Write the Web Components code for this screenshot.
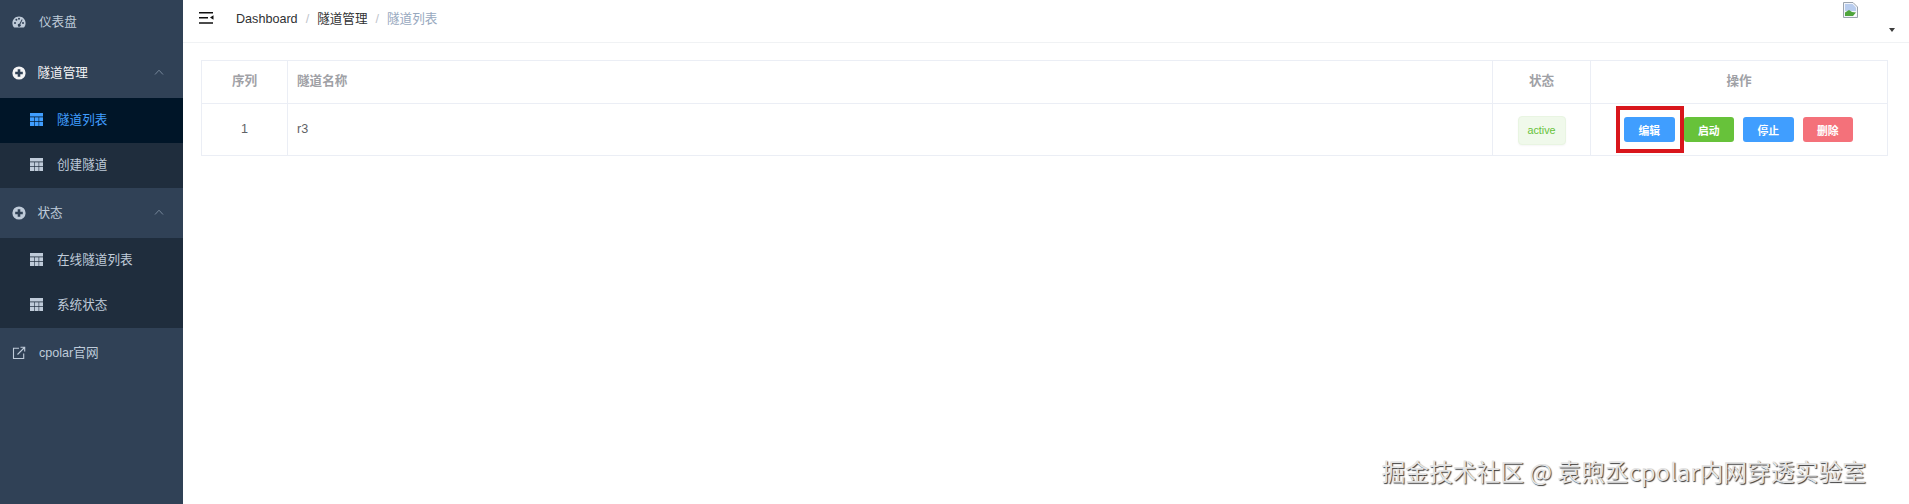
<!DOCTYPE html>
<html lang="zh">
<head>
<meta charset="utf-8">
<title>隧道列表</title>
<style>
  html, body { margin: 0; height: 100%; overflow: hidden; background: #fff; }
  body { font-family: "Liberation Sans", "Noto Sans CJK SC", sans-serif; font-size: 12.6px; }
</style>
</head>
<body>
<app-shell>
  <side-nav slot="side">
    <nav-item icon="gauge" style="margin:-1px 0 1px">仪表盘</nav-item>
    <nav-item icon="plus" arrow style="--item-color:#f4f4f5">隧道管理</nav-item>
    <nav-sub active>隧道列表</nav-sub>
    <nav-sub>创建隧道</nav-sub>
    <nav-item icon="plus" arrow>状态</nav-item>
    <nav-sub>在线隧道列表</nav-sub>
    <nav-sub>系统状态</nav-sub>
    <nav-item icon="link">cpolar官网</nav-item>
  </side-nav>
  <top-bar slot="top"></top-bar>
  <tunnel-table>
    <tag-active slot="status">active</tag-active>
    <el-btn slot="actions" color="#409eff" highlight>编辑</el-btn>
    <el-btn slot="actions" color="#67c23a">启动</el-btn>
    <el-btn slot="actions" color="#409eff">停止</el-btn>
    <el-btn slot="actions" color="#f4717a">删除</el-btn>
  </tunnel-table>
  <water-mark slot="over">掘金技术社区 @ 袁煦丞cpolar内网穿透实验室</water-mark>
</app-shell>

<script>
const FONT = '"Liberation Sans", "Noto Sans CJK SC", sans-serif';

class AppShell extends HTMLElement {
  connectedCallback() {
    this.attachShadow({ mode: 'open' }).innerHTML = `
      <style>
        :host { display: flex; height: 504px; position: relative; overflow: hidden; font-family: ${FONT}; }
        .side { flex: 0 0 183px; background: #304156; overflow: hidden; }
        .main { flex: 1; min-width: 0; display: flex; flex-direction: column; }
        .content { padding: 17px 21px 0 18px; }
      </style>
      <div class="side"><slot name="side"></slot></div>
      <div class="main">
        <slot name="top"></slot>
        <div class="content"><slot></slot></div>
      </div>
      <slot name="over"></slot>
    `;
  }
}
customElements.define('app-shell', AppShell);

class SideNav extends HTMLElement {
  connectedCallback() {
    this.attachShadow({ mode: 'open' }).innerHTML = `
      <style>
        :host { display: flex; flex-direction: column; margin-top: -2px; }
      </style>
      <slot></slot>
    `;
  }
}
customElements.define('side-nav', SideNav);

const NAV_ICONS = {
  gauge: `<svg width="14" height="12" viewBox="0 0 14 12"><path fill="#bfcbd9" d="M7 0.6C3.2 0.6 0.4 3.5 0.4 7.2c0 1.5.4 2.8 1.2 3.9.2.2.4.3.7.3h9.4c.3 0 .5-.1.7-.3.8-1.1 1.2-2.4 1.2-3.9C13.600 3.500 10.800.600 7 .600z"/><g fill="#304156"><circle cx="3" cy="7" r="1"/><circle cx="4.400" cy="3.800" r="1"/><circle cx="7" cy="2.700" r="1"/><circle cx="11" cy="7" r="1"/><path d="M9.800 3.300l.8.4L8.300 8.200a1.500 1.500 0 1 1-.9-.4z"/></g></svg>`,
  plus: `<svg width="14" height="14" viewBox="0 0 14 14"><circle cx="7" cy="7" r="6.600" fill="currentColor"/><path fill="#304156" d="M5.700 3.200h2.600v2.500h2.500v2.600H8.300v2.500H5.700V8.300H3.200V5.700h2.500z"/></svg>`,
  link: `<svg width="14" height="14" viewBox="0 0 14 14" fill="none" stroke="#bfcbd9" stroke-width="1.100"><path d="M7 2.300H1.500v10.200h10.200V7.500"/><path d="M5.500 8.500L12.500 1.500M8.500 1.300h4.200v4.200"/></svg>`
};

class NavItem extends HTMLElement {
  connectedCallback() {
    const hasArrow = this.hasAttribute('arrow');
    const icon = NAV_ICONS[this.getAttribute('icon')] || '';
    const arrow = hasArrow
      ? `<svg class="arrow" width="10" height="6" viewBox="0 0 10 6" fill="none" stroke="#75869a" stroke-width="1"><path d="M1 5.500L5 1.200l4 4.300"/></svg>`
      : '';
    this.attachShadow({ mode: 'open' }).innerHTML = `
      <style>
        :host { display: flex; flex: 0 0 50px; height: 50px; align-items: center; padding-left: 12px; font-size: 12.6px;
                color: var(--item-color, #bfcbd9); box-sizing: border-box; position: relative; }
        .ic { width: 14px; display: flex; justify-content: center; margin-right: ${hasArrow ? 11.500 : 13}px; }
        .tx { padding-bottom: 3px; }
        .arrow { position: absolute; right: 19px; top: 21px; }
      </style>
      <span class="ic">${icon}</span><span class="tx"><slot></slot></span>${arrow}
    `;
  }
}
customElements.define('nav-item', NavItem);

class NavSub extends HTMLElement {
  connectedCallback() {
    const on = this.hasAttribute('active');
    const c = on ? '#409eff' : '#bfcbd9';
    this.attachShadow({ mode: 'open' }).innerHTML = `
      <style>
        :host { display: flex; flex: 0 0 45px; height: 45px; align-items: center; padding-left: 30px; font-size: 12.6px;
                background: ${on ? '#001528' : '#1f2d3d'}; color: ${c}; box-sizing: border-box; }
        svg { margin-right: 14px; fill: ${c}; margin-top: -2px; }
        .tx { padding-bottom: 4px; }
      </style>
      <svg width="13" height="13" viewBox="0 0 13 13">
        <rect width="13" height="3.500"/>
        <rect y="4.300" width="4.400" height="4"/><rect x="5" y="4.300" width="3.600" height="4"/><rect x="9.200" y="4.300" width="3.800" height="4"/>
        <rect y="9" width="4.400" height="4"/><rect x="5" y="9" width="3.600" height="4"/><rect x="9.200" y="9" width="3.800" height="4"/>
      </svg><span class="tx"><slot></slot></span>
    `;
  }
}
customElements.define('nav-sub', NavSub);

class TopBar extends HTMLElement {
  connectedCallback() {
    this.attachShadow({ mode: 'open' }).innerHTML = `
      <style>
        :host { display: flex; height: 43px; box-sizing: border-box; align-items: center; padding: 0 0 0 16px;
                border-bottom: 1px solid #f0f2f4; background: #fff; font-size: 12.6px; color: #303133; position: relative; }
        .burger { margin-right: 22px; margin-top: -7px; display: block; }
        .crumbs { display: flex; align-items: baseline; margin-top: -8px; }
        .sep { color: #c0c4cc; margin: 0 8px; }
        .last { color: #97a8be; }
        .avatar { margin-left: auto; margin-right: 14px; display: flex; flex-direction: column; align-items: flex-end; }
        .broken { margin-right: 37px; margin-top: 1px; display: block; }
        .caret { width: 0; height: 0; border: 3px solid transparent; border-top: 4px solid #3c3c3c; border-bottom: 0; margin-top: 10px; margin-bottom: 9px; }
      </style>
      <svg class="burger" width="15" height="14" viewBox="0 0 15 14">
        <path fill="#111" d="M0 1h14v1.400H0zM0 6h9v1.400H0zM0 11.300h14v1.400H0z"/><path fill="#111" d="M14.500 4.300v4.400L11 6.500z"/>
      </svg>
      <div class="crumbs">
        <span>Dashboard</span><span class="sep">/</span><span>隧道管理</span><span class="sep">/</span><span class="last">隧道列表</span>
      </div>
      <div class="avatar">
        <svg class="broken" width="15" height="16" viewBox="0 0 15 16">
          <path fill="#f2f5fb" stroke="#9aa3ad" d="M.5.500h9.500l4.500 4.500v10.500H.5z"/>
          <path fill="#b9cdee" d="M2 2h7.500l3.500 3.500V9H2z"/>
          <path fill="#4fa53c" d="M2 14v-3.500L6 8l3 2 4 .5-3 3.500z"/>
          <path fill="#fff" d="M10 15l4-5v2l-2.500 3z"/>
        </svg>
        <span class="caret"></span>
      </div>
    `;
  }
}
customElements.define('top-bar', TopBar);

class TunnelTable extends HTMLElement {
  connectedCallback() {
    this.attachShadow({ mode: 'open' }).innerHTML = `
      <style>
        :host { display: grid; grid-template-columns: 86px 1fr 98px 296px; grid-template-rows: 43px 52px;
                border: 1px solid #ebeef5; font-size: 12.6px; color: #606266; box-sizing: border-box; width: 1687px; height: 96px; }
        div { display: flex; align-items: center; box-sizing: border-box; border-right: 1px solid #ebeef5; }
        .end { border-right: 0; }
        .head { border-bottom: 1px solid #ebeef5; color: #9fa1a6; font-weight: 700; padding-bottom: 5px; }
        .body { padding-bottom: 3px; }
        .c { justify-content: center; }
        .l { padding-left: 9px; }
        .actions { gap: 9px; padding: 0 1px 1px 0; }
      </style>
      <div class="head c">序列</div>
      <div class="head l">隧道名称</div>
      <div class="head c">状态</div>
      <div class="head c end">操作</div>
      <div class="body c">1</div>
      <div class="body l">r3</div>
      <div class="c"><slot name="status"></slot></div>
      <div class="c actions end"><slot name="actions"></slot></div>
    `;
  }
}
customElements.define('tunnel-table', TunnelTable);

class TagActive extends HTMLElement {
  connectedCallback() {
    this.attachShadow({ mode: 'open' }).innerHTML = `
      <style>
        :host { display: inline-flex; align-items: center; justify-content: center; width: 48px; height: 29px; box-sizing: border-box;
                background: #f0f9eb; border: 1px solid #e9f5e2; border-radius: 4px; color: #67c23a; font-size: 10.800px;
                box-shadow: 0 1px 2px rgba(0, 0, 0, .04); }
      </style>
      <slot></slot>
    `;
  }
}
customElements.define('tag-active', TagActive);

class ElBtn extends HTMLElement {
  connectedCallback() {
    const color = this.getAttribute('color');
    this.attachShadow({ mode: 'open' }).innerHTML = `
      <style>
        :host { display: inline-flex; position: relative; align-items: center; justify-content: center; width: 50.500px; height: 25px;
                background: ${color}; border-radius: 3px; color: #fff; font-size: 10.800px; font-weight: 700; }
        :host([highlight])::after { content: ""; position: absolute; left: -8px; right: -9px; top: -11px; bottom: -11px; border: 4px solid #d9161c; box-sizing: border-box; }
      </style>
      <slot></slot>
    `;
  }
}
customElements.define('el-btn', ElBtn);

class WaterMark extends HTMLElement {
  connectedCallback() {
    this.attachShadow({ mode: 'open' }).innerHTML = `
      <style>
        :host { position: absolute; right: 43px; bottom: 17px; font-family: "Noto Sans CJK SC", sans-serif; font-size: 23.800px; line-height: 32px;
                white-space: nowrap; color: #e4e4e4; text-shadow: 1px 1px 1px #3a3a3a; }
      </style>
      <slot></slot>
    `;
  }
}
customElements.define('water-mark', WaterMark);
</script>
</body>
</html>
